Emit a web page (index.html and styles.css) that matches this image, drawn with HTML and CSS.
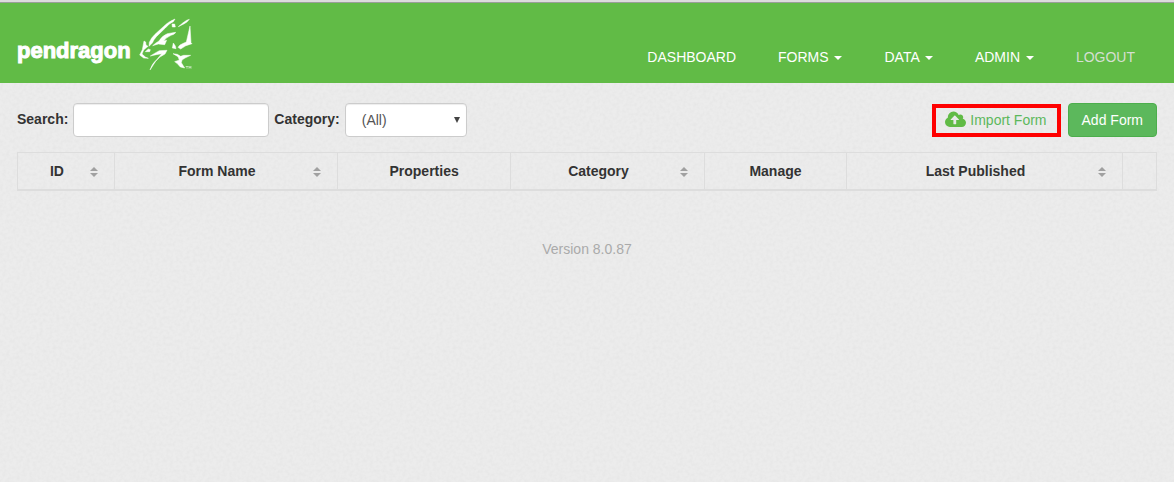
FILE: index.html
```html
<!DOCTYPE html>
<html lang="en">
<head>
    <meta charset="UTF-8">
    <meta name="viewport" content="width=device-width, initial-scale=1.0">
    <title>Pendragon Forms</title>
    <link rel="stylesheet" href="styles.css">
</head>
<body>
    <header class="site-header">
        <a class="brand" href="#">
            <span class="brand-name">pendragon</span>
            <svg class="brand-mark" viewBox="30 24 162 156" aria-hidden="true">
                <path d="M60 109 L61 97 Q66 84 78 73 L103 50 Q116 36 138 27 L133 35 Q120 40 109 54 L82 80 Q74 89 70 99Z"/>
                <path d="M148 50 L164 37 Q174 29 181 28 Q176 36 166 41Z"/>
                <path d="M129 42 L137 42 L139 51 L130 51Z"/>
                <path d="M71 107 Q81 98 90 93 Q98 78 115 71 L140 67 Q138 73 126 76 Q112 82 104 93 L113 91 L107 104 L88 102Z"/>
                <path d="M183 48 L186 98 L189 101 Q170 105 155 117 L147 112 Q151 104 163 100 L172 96Z"/>
                <path d="M133 99 L139 108 L141 116 L130 114Z"/>
                <path d="M45 93 L50 96 L51 105 L57 109 L44 120 L39 132 L49 141 L58 145 L44 144 L32 135 L40 119Z"/>
                <path d="M49 125 L58 117 L64 119 L62 125Z"/>
                <path d="M64 138 Q76 130 91 122 L114 121 L108 132 Q92 139 80 154 L63 180 Q68 162 84 148 L98 131 L82 134Z"/>
                <path d="M132 131 L145 133 L155 139 L164 136 L185 136 L168 144 L159 150 L157 158 L167 174 L154 171 L144 160 L137 155 L151 150 L147 140Z"/>
                <path class="tm" d="M170 168h8v2h-3v6h-2v-6h-3zM179 176v-8h2l2 4 2-4h2v8h-2v-4l-2 3-2-3v4z"/>
            </svg>
        </a>
        <nav class="main-nav">
            <a href="#">DASHBOARD</a>
            <a href="#">FORMS <span class="caret"></span></a>
            <a href="#">DATA <span class="caret"></span></a>
            <a href="#">ADMIN <span class="caret"></span></a>
            <a class="logout" href="#">LOGOUT</a>
        </nav>
    </header>

    <main class="content">
        <div class="toolbar">
            <label for="search">Search:</label>
            <input type="text" id="search" class="form-control search-box">
            <label for="category">Category:</label>
            <select id="category" class="form-control category-select">
                <option>(All)</option>
            </select>
            <div class="actions">
                <a class="import-link" href="#">
                    <svg class="cloud-icon" viewBox="0 0 1920 1792" aria-hidden="true">
                        <path d="M1280 864q0-14-9-23l-352-352q-9-9-23-9t-23 9l-351 351q-10 12-10 24 0 14 9 23t23 9h224v352q0 13 9.5 22.5t22.5 9.5h192q13 0 22.5-9.5t9.5-22.5v-352h224q13 0 22.5-9.5t9.5-22.5zm640 288q0 159-112.5 271.5t-271.5 112.5h-1088q-185 0-316.5-131.5t-131.5-316.5q0-130 70-240t188-165q-2-30-2-43 0-212 150-362t362-150q156 0 285.5 87t188.5 231q71-62 166-62 106 0 181 75t75 181q0 76-41 138 130 31 213.5 135.5t83.5 238.5z"/>
                    </svg>
                    Import Form
                </a>
                <button type="button" class="btn-add">Add Form</button>
            </div>
        </div>

        <table class="forms-table">
            <colgroup>
                <col class="col-id">
                <col class="col-name">
                <col class="col-properties">
                <col class="col-category">
                <col class="col-manage">
                <col class="col-published">
                <col>
            </colgroup>
            <thead>
                <tr>
                    <th class="sortable">ID</th>
                    <th class="sortable">Form Name</th>
                    <th>Properties</th>
                    <th class="sortable">Category</th>
                    <th>Manage</th>
                    <th class="sortable">Last Published</th>
                    <th></th>
                </tr>
            </thead>
        </table>
    </main>

    <footer class="site-footer">Version 8.0.87</footer>
</body>
</html>
```
FILE: styles.css
```css
:root {
    --green: #61bb46;
    --green-btn: #5cb85c;
    --border: #dddddd;
    --text: #333333;
}

* {
    box-sizing: border-box;
}

body {
    margin: 0;
    font-family: "Liberation Sans", Arial, sans-serif;
    font-size: 14px;
    line-height: 20px;
    color: var(--text);
    background-color: #ececec;
    /* light paper grain */
    background-image: url("data:image/svg+xml,%3Csvg xmlns='http://www.w3.org/2000/svg' width='200' height='200'%3E%3Cfilter id='n'%3E%3CfeTurbulence type='fractalNoise' baseFrequency='.3' numOctaves='2' stitchTiles='stitch'/%3E%3CfeColorMatrix values='0 0 0 0 0 0 0 0 0 0 0 0 0 0 0 .04 0 0 0 -.014'/%3E%3C/filter%3E%3Crect width='200' height='200' filter='url(%23n)'/%3E%3C/svg%3E");
}

a {
    text-decoration: none;
}

/* Header */
.site-header {
    display: flex;
    justify-content: space-between;
    align-items: flex-start;
    height: 83px;
    padding: 0 17px;
    background: var(--green);
    border-top: 2px solid #dcdcdc;
    box-shadow: inset 0 1px 0 #9a9f99;
}

.brand {
    display: flex;
    gap: 8px;
    padding-top: 16px;
    color: #ffffff;
}

.brand-name {
    padding-top: 20px;
    font-size: 22px;
    font-weight: bold;
    line-height: 26px;
    -webkit-text-stroke: 1px #ffffff;
}

.brand-mark {
    width: 54px;
    height: 52px;
    fill: #ffffff;
    stroke: #ffffff;
    stroke-width: 1.5;
}

.brand-mark .tm {
    stroke: none;
    opacity: 0.7;
}

.main-nav {
    display: flex;
    gap: 42px;
    padding: 45px 22px 0 0;
}

.main-nav a {
    color: #ffffff;
}

.main-nav .logout {
    color: #d5dfd2;
}

.caret {
    display: inline-block;
    margin-left: 2px;
    vertical-align: middle;
    border-top: 4px solid;
    border-left: 4px solid transparent;
    border-right: 4px solid transparent;
}

/* Toolbar */
.content {
    padding: 20px 17px 0;
}

.toolbar {
    display: flex;
    align-items: center;
    gap: 5px;
    margin-bottom: 15px;
}

.toolbar label {
    font-weight: bold;
    padding-bottom: 2px;
}

.form-control {
    height: 34px;
    padding: 6px 12px;
    font: inherit;
    color: #555555;
    background-color: #ffffff;
    border: 1px solid #cccccc;
    border-radius: 4px;
    box-shadow: inset 0 1px 1px rgba(0, 0, 0, 0.075);
}

.search-box {
    width: 196px;
}

.category-select {
    width: 122px;
    padding-left: 16px;
    appearance: none;
    background-image: url("data:image/svg+xml,%3Csvg xmlns='http://www.w3.org/2000/svg' width='6' height='6'%3E%3Cpath d='M0 0h6L3 6z' fill='%23444'/%3E%3C/svg%3E");
    background-repeat: no-repeat;
    background-position: right 6px center;
}

.actions {
    display: flex;
    align-items: center;
    gap: 7px;
    margin-left: auto;
}

.import-link {
    display: flex;
    align-items: center;
    gap: 4px;
    height: 33px;
    padding: 0 10px 0 9px;
    color: var(--green-btn);
    border: 4px solid #ff0000;
}

.cloud-icon {
    width: 21px;
    height: 20px;
    fill: var(--green);
}

.btn-add {
    height: 34px;
    padding: 6px 13px;
    font: inherit;
    color: #ffffff;
    background: var(--green-btn);
    border: 1px solid #4cae4c;
    border-radius: 4px;
    cursor: pointer;
}

/* Forms table */
.forms-table {
    width: 100%;
    table-layout: fixed;
    border-collapse: collapse;
    border: 1px solid var(--border);
}

.forms-table th {
    position: relative;
    height: 37px;
    padding: 8px;
    border: 1px solid var(--border);
    border-bottom-width: 2px;
}

.forms-table .sortable {
    padding-right: 26px;
    cursor: pointer;
}

.col-id { width: 8.5%; }
.col-name { width: 19.6%; }
.col-properties { width: 15.2%; }
.col-category { width: 17%; }
.col-manage { width: 12.5%; }
.col-published { width: 24.2%; }

/* sort arrows */
.sortable::before,
.sortable::after {
    content: "";
    position: absolute;
    right: 16px;
    border-left: 4px solid transparent;
    border-right: 4px solid transparent;
}

.sortable::before {
    top: 14px;
    border-bottom: 4px solid #a0a0a0;
}

.sortable::after {
    top: 20px;
    border-top: 4px solid #a0a0a0;
}

/* Footer */
.site-footer {
    padding: 48px 17px 20px;
    text-align: center;
    color: #aaaaaa;
}
```
